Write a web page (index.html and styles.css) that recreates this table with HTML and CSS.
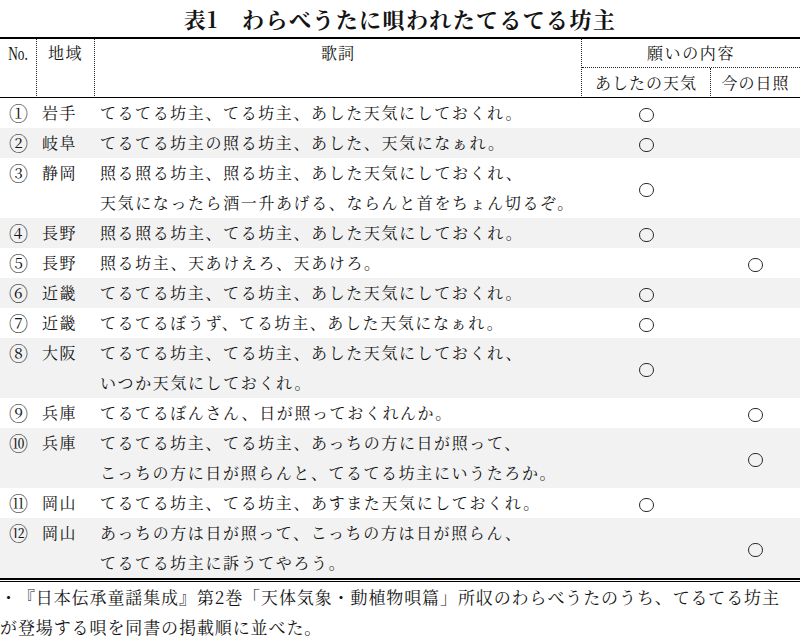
FILE: index.html
```html
<!DOCTYPE html>
<html lang="ja">
<head>
<meta charset="utf-8">
<link rel="stylesheet" href="styles.css">
</head>
<body>
<h1 class="title">表1　わらべうたに唄われたてるてる坊主</h1>
<div class="wrap">
<table class="tbl">
  <colgroup>
    <col class="c-no"><col class="c-area"><col class="c-lyric"><col class="c-tomorrow"><col class="c-now">
  </colgroup>
  <thead>
    <tr>
      <th rowspan="2" class="h-no"><span class="no">No.</span></th>
      <th rowspan="2" class="h-area">地域</th>
      <th rowspan="2" class="h-lyric">歌詞</th>
      <th colspan="2" class="h-wish">願いの内容</th>
    </tr>
    <tr>
      <th class="h-tomorrow">あしたの天気</th>
      <th class="h-now">今の日照</th>
    </tr>
  </thead>
  <tbody>
    <tr><td class="num">①</td><td class="area">岩手</td><td class="lyric">てるてる坊主、てる坊主、あした天気にしておくれ。</td><td class="mark"><span class="circle"></span></td><td class="mark"></td></tr>
    <tr class="alt"><td class="num">②</td><td class="area">岐阜</td><td class="lyric">てるてる坊主の照る坊主、あした、天気になぁれ。</td><td class="mark"><span class="circle"></span></td><td class="mark"></td></tr>
    <tr><td class="num">③</td><td class="area">静岡</td><td class="lyric">照る照る坊主、照る坊主、あした天気にしておくれ、<br>天気になったら酒一升あげる、ならんと首をちょん切るぞ。</td><td class="mark"><span class="circle"></span></td><td class="mark"></td></tr>
    <tr class="alt"><td class="num">④</td><td class="area">長野</td><td class="lyric">照る照る坊主、てる坊主、あした天気にしておくれ。</td><td class="mark"><span class="circle"></span></td><td class="mark"></td></tr>
    <tr><td class="num">⑤</td><td class="area">長野</td><td class="lyric">照る坊主、天あけえろ、天あけろ。</td><td class="mark"></td><td class="mark"><span class="circle"></span></td></tr>
    <tr class="alt"><td class="num">⑥</td><td class="area">近畿</td><td class="lyric">てるてる坊主、てる坊主、あした天気にしておくれ。</td><td class="mark"><span class="circle"></span></td><td class="mark"></td></tr>
    <tr><td class="num">⑦</td><td class="area">近畿</td><td class="lyric">てるてるぼうず、てる坊主、あした天気になぁれ。</td><td class="mark"><span class="circle"></span></td><td class="mark"></td></tr>
    <tr class="alt"><td class="num">⑧</td><td class="area">大阪</td><td class="lyric">てるてる坊主、てる坊主、あした天気にしておくれ、<br>いつか天気にしておくれ。</td><td class="mark"><span class="circle"></span></td><td class="mark"></td></tr>
    <tr><td class="num">⑨</td><td class="area">兵庫</td><td class="lyric">てるてるぼんさん、日が照っておくれんか。</td><td class="mark"></td><td class="mark"><span class="circle"></span></td></tr>
    <tr class="alt"><td class="num">⑩</td><td class="area">兵庫</td><td class="lyric">てるてる坊主、てる坊主、あっちの方に日が照って、<br>こっちの方に日が照らんと、てるてる坊主にいうたろか。</td><td class="mark"></td><td class="mark"><span class="circle"></span></td></tr>
    <tr><td class="num">⑪</td><td class="area">岡山</td><td class="lyric">てるてる坊主、てる坊主、あすまた天気にしておくれ。</td><td class="mark"><span class="circle"></span></td><td class="mark"></td></tr>
    <tr class="alt"><td class="num">⑫</td><td class="area">岡山</td><td class="lyric">あっちの方は日が照って、こっちの方は日が照らん、<br>てるてる坊主に訴うてやろう。</td><td class="mark"></td><td class="mark"><span class="circle"></span></td></tr>
  </tbody>
</table>
</div>
<p class="note">・『日本伝承童謡集成』第2巻「天体気象・動植物唄篇」所収のわらべうたのうち、てるてる坊主<br>が登場する唄を同書の掲載順に並べた。</p>
</body>
</html>
```

FILE: styles.css
```css
html, body {
  margin: 0;
  padding: 0;
  background: #ffffff;
}
body {
  width: 800px;
  color: #141414;
  font-family: "Noto Serif CJK JP", "Liberation Serif", "Noto Sans CJK JP", serif;
  text-spacing-trim: space-all;
}
.title {
  margin: 0;
  height: 37px;
  line-height: 37px;
  font-size: 22px;
  letter-spacing: 1.4px;
  font-weight: bold;
  text-align: center;
}
.wrap {
  border-bottom: 1px solid #000;
  padding-bottom: 1px;
}
.tbl {
  width: 800px;
  table-layout: fixed;
  border-collapse: separate;
  border-spacing: 0;
  border-top: 2px solid #000;
  border-bottom: 2px solid #000;
  font-size: 16px;
  letter-spacing: 1.6px;
}
.c-no { width: 37px; }
.c-area { width: 58px; }
.c-lyric { width: 487px; }
.c-tomorrow { width: 129px; }
.c-now { width: 89px; }

.tbl th {
  font-weight: normal;
  padding: 0;
  text-align: center;
  vertical-align: top;
}
.h-no, .h-area, .h-lyric {
  line-height: 28px;
  border-bottom: 1px solid #000;
  border-right: 1px dotted #222;
}
.h-lyric { letter-spacing: 1px; }
.h-wish {
  line-height: 28px;
  border-bottom: 1px dotted #222;
}
.h-tomorrow, .h-now {
  line-height: 29px;
  border-bottom: 1px solid #000;
}
.h-tomorrow {
  border-right: 1px dotted #222;
  letter-spacing: 1px;
}
.h-now { letter-spacing: 1px; }
.no {
  display: inline-block;
  font-family: "Liberation Serif", serif;
  font-size: 19px;
  letter-spacing: 0;
  transform: scaleX(0.7);
  transform-origin: center;
  margin-top: 1px;
}

.tbl td {
  padding: 0;
  line-height: 30px;
  vertical-align: top;
  white-space: nowrap;
}
.tbl tr.alt td { background: #f2f2f2; }
.tbl td.num {
  text-align: center;
  letter-spacing: 0;
  font-size: 19px;
}
.area { padding-left: 5px !important; }
.lyric { padding-left: 5px !important; }
.tbl td.mark {
  text-align: center;
  vertical-align: middle;
}
.circle {
  display: inline-block;
  width: 12.5px;
  height: 12.5px;
  border: 1.3px solid #2a2a2a;
  border-radius: 50%;
  vertical-align: middle;
}
.note {
  margin: 0;
  font-size: 17px;
  letter-spacing: 0.9px;
  line-height: 30px;
  white-space: nowrap;
}
```
